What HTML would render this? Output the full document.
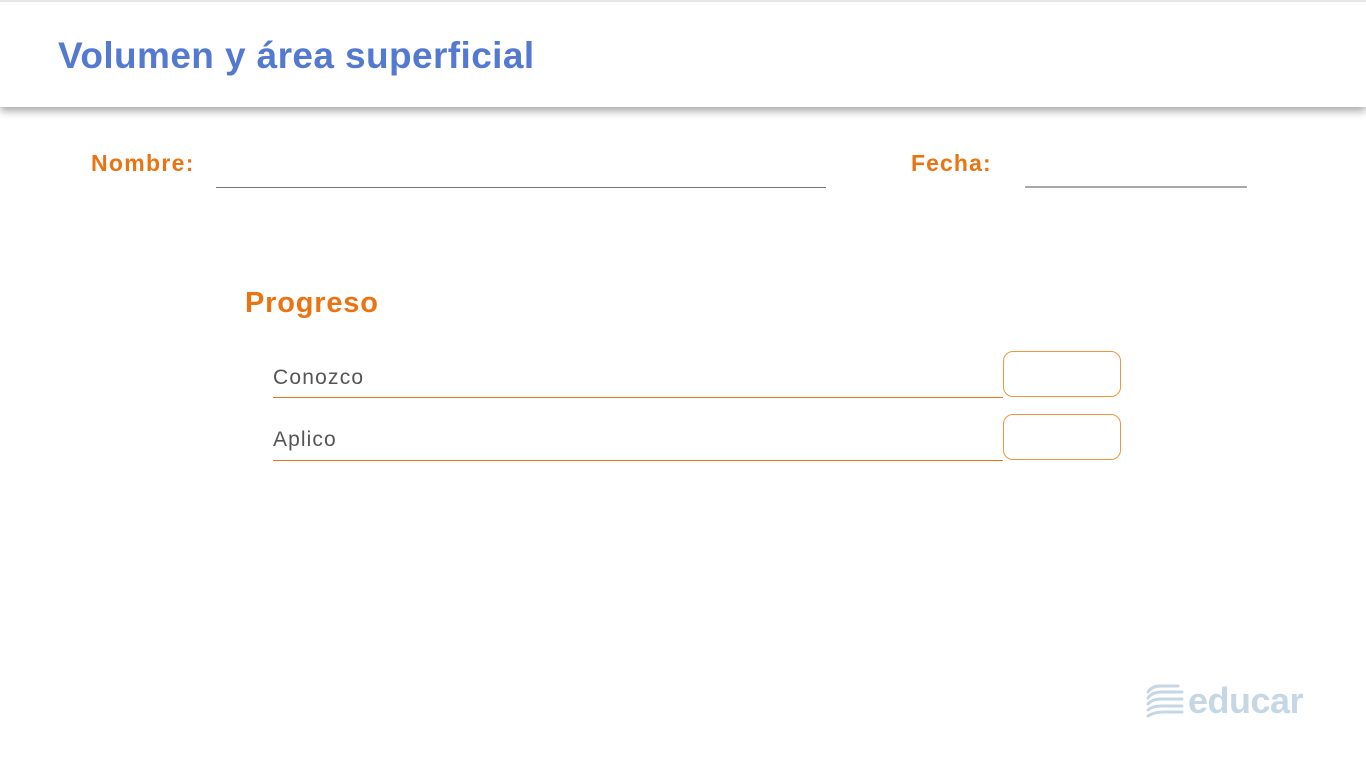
<!DOCTYPE html>
<html><head><meta charset="utf-8"><style>
body{margin:0;width:1366px;height:769px;background:#fff;position:relative;overflow:hidden;font-family:"Liberation Sans",Arial,sans-serif}
.hdr{position:absolute;left:0;top:0;width:1366px;height:107px;background:#fff;border-top:2px solid #e6e6e6;box-sizing:border-box;box-shadow:0 4px 8px rgba(0,0,0,.35)}
.t{position:absolute;left:58px;top:33px;font-size:37px;font-weight:bold;color:#5479d1;white-space:nowrap;letter-spacing:0.4px}
.o{position:absolute;color:#eb7412;font-weight:bold;white-space:nowrap}
.g{position:absolute;color:#555;font-size:21px;white-space:nowrap}
.l{position:absolute;height:0}
.box{position:absolute;left:1003px;width:118px;height:46px;border:1px solid #f0963e;border-radius:10px;box-sizing:border-box}
</style></head><body>
<div class="hdr"><div class="t">Volumen y área superficial</div></div>
<div class="o" style="left:91px;top:150px;font-size:23px;letter-spacing:1.3px">Nombre:</div>
<div class="l" style="left:216px;top:187px;width:610px;border-top:1px solid #6f7287"></div>
<div class="o" style="left:911px;top:150px;font-size:23px;letter-spacing:1.1px">Fecha:</div>
<div class="l" style="left:1025px;top:186px;width:222px;border-top:2px solid #a8a8a8"></div>
<div class="o" style="left:245px;top:287px;font-size:29px;letter-spacing:0.8px">Progreso</div>
<div class="g" style="left:273px;top:366px;letter-spacing:1.2px">Conozco</div>
<div class="l" style="left:273px;top:397px;width:730px;border-top:1px solid #eb7412"></div>
<div class="box" style="top:351px"></div>
<div class="g" style="left:273px;top:428px;letter-spacing:1.1px">Aplico</div>
<div class="l" style="left:273px;top:460px;width:730px;border-top:1px solid #eb7412"></div>
<div class="box" style="top:414px"></div>
<svg style="position:absolute;left:1144px;top:682px" width="44" height="40" viewBox="0 0 44 40">
<g fill="none" stroke="#c5d7e4" stroke-width="3" stroke-linecap="round">
<path d="M4 10 Q8 4 16 4 H34"/><path d="M4 16 Q8 10 18 10 H38"/><path d="M4 22 Q8 17 18 17 H38"/><path d="M4 28 Q8 24 18 24 H38"/><path d="M4 34 Q10 30 20 30 H38"/>
</g></svg>
<div style="position:absolute;left:1188px;top:680px;font-size:36px;font-weight:bold;color:#c5d7e4;letter-spacing:-0.5px">educar</div>
</body></html>
